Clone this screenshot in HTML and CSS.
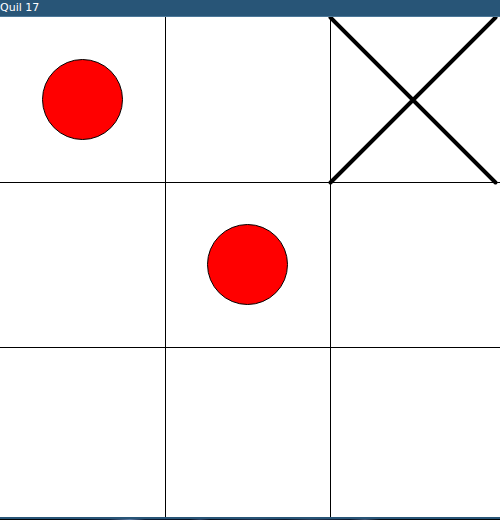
FILE: index.html
```html
<!DOCTYPE html>
<html lang="en">
<head>
<meta charset="utf-8">
<title>Quil 17</title>
<link rel="stylesheet" href="styles.css">
</head>
<body>
<main class="window">
  <header class="titlebar"><h1 class="title">Quil 17</h1></header>
  <svg class="board" viewBox="0 0 500 500" role="img" aria-label="Tic-tac-toe board">
    <g class="grid">
      <path d="M165.5 0V500M330.5 0V500M0 165.5H500M0 330.5H500"/>
    </g>
    <circle class="nought" cx="82.5" cy="82.5" r="40"/>
    <circle class="nought" cx="247.5" cy="247.5" r="40"/>
    <path class="cross" d="M330.5 0.5L495.5 165.5M495.5 0.5L330.5 165.5"/>
  </svg>
</main>
<div class="desktop"></div>
</body>
</html>
```
FILE: styles.css
```css
* {
  box-sizing: border-box;
}

body {
  margin: 0;
  background: #fff;
  font-family: "DejaVu Sans", sans-serif;
}

.window {
  border-bottom: 2px solid #285577;
}

.titlebar {
  height: 17px;
  background: #285577;
  border-bottom: 1px solid #4c7899;
}

.title {
  margin: 0;
  color: #fff;
  font-size: 11px;
  font-weight: 400;
  line-height: 15px;
}

.board {
  display: block;
  width: 100%;
  background: #fff;
}

.grid {
  fill: none;
  stroke: #000;
  stroke-width: 1;
}

.nought {
  fill: #f00;
  stroke: #000;
  stroke-width: 1;
}

.cross {
  fill: none;
  stroke: #000;
  stroke-width: 4;
  stroke-linecap: round;
}

/* Sliver of wallpaper below the window */
.desktop {
  height: 1px;
  background: linear-gradient(90deg, #000 0%, #02060f 14%, #10203a 22%, #5d7ba3 26%, #0c1a33 29%, #060d1c 38%, #2b3d5c 40%, #060d1c 42%, #1c2b47 51%, #0a1428 57%, #26354f 62%, #0a1428 70%, #3d4f6b 73%, #03070f 76%, #000 100%);
}
```
